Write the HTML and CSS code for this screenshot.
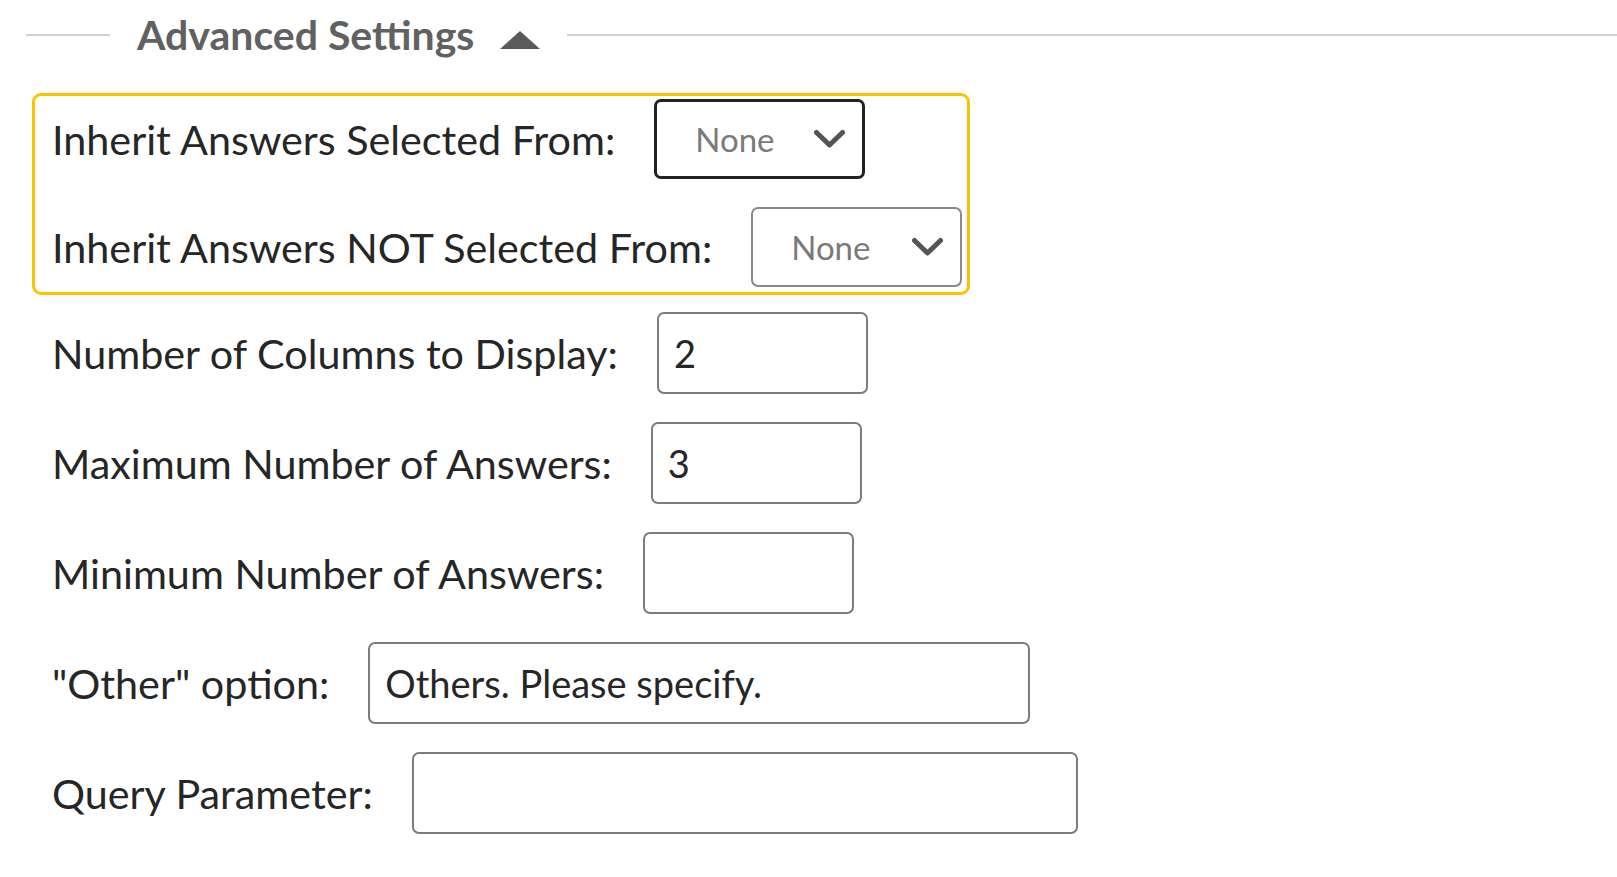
FILE: index.html
```html
<!DOCTYPE html>
<html>
<head>
<meta charset="utf-8">
<link rel="stylesheet" href="styles.css">
</head>
<body>
<div class="page">
  <div class="section-head">
    <span class="rule rule-left"></span>
    <span class="head-title">Advanced Settings</span>
    <svg class="head-caret" width="40" height="18" viewBox="0 0 40 18"><polygon points="20,0 40,18 0,18" fill="#5a5a5a"/></svg>
    <span class="rule rule-right"></span>
  </div>

  <div class="highlight">
    <div class="row">
      <label class="label">Inherit Answers Selected From:</label>
      <div class="select select-focus">
        <span class="select-value">None</span>
        <svg class="chev" width="33" height="20" viewBox="0 0 33 20"><polyline points="3.5,3.5 16.5,16 29.5,3.5" fill="none" stroke="#555" stroke-width="5" stroke-linecap="round" stroke-linejoin="round"/></svg>
      </div>
    </div>
    <div class="row">
      <label class="label">Inherit Answers NOT Selected From:</label>
      <div class="select">
        <span class="select-value">None</span>
        <svg class="chev" width="33" height="20" viewBox="0 0 33 20"><polyline points="3.5,3.5 16.5,16 29.5,3.5" fill="none" stroke="#555" stroke-width="5" stroke-linecap="round" stroke-linejoin="round"/></svg>
      </div>
    </div>
  </div>

  <div class="fields">
    <div class="row">
      <label class="label">Number of Columns to Display:</label>
      <input class="field field-sm" type="text" value="2">
    </div>
    <div class="row">
      <label class="label">Maximum Number of Answers:</label>
      <input class="field field-sm" type="text" value="3">
    </div>
    <div class="row">
      <label class="label">Minimum Number of Answers:</label>
      <input class="field field-sm" type="text" value="">
    </div>
    <div class="row">
      <label class="label">"Other" option:</label>
      <input class="field field-lg" type="text" value="Others. Please specify.">
    </div>
    <div class="row">
      <label class="label">Query Parameter:</label>
      <input class="field field-xl" type="text" value="">
    </div>
  </div>
</div>
</body>
</html>
```

FILE: styles.css
```css
html, body {
  margin: 0;
  padding: 0;
  background: #ffffff;
}

body {
  font-family: Lato, "Open Sans", sans-serif;
  color: #262626;
}

.page {
  padding: 9px 0 0 26px;
}

.section-head {
  display: flex;
  align-items: center;
  height: 52px;
}

.rule {
  display: block;
  height: 2px;
  background: #cfcfcf;
}

.rule-left {
  width: 84px;
}

.rule-right {
  flex: 1 1 auto;
}

.head-title {
  margin-left: 27px;
  font-size: 41px;
  font-weight: 700;
  color: #616161;
  line-height: 52px;
}

.head-caret {
  margin: 10px 27px 0 26px;
  display: block;
}

.highlight {
  margin: 32px 0 0 6px;
  width: 915px;
  border: 3px solid #fbc400;
  border-radius: 9px;
  padding: 3px 0 5px 17px;
  display: flex;
  flex-direction: column;
  gap: 28px;
}

.row {
  display: flex;
  align-items: center;
  gap: 39px;
}

.label {
  font-size: 41.3px;
  line-height: 50px;
  color: #262626;
  white-space: nowrap;
}

.label-tight {
  letter-spacing: -0.3px;
}

.select {
  box-sizing: border-box;
  width: 211px;
  height: 80px;
  border: 2.5px solid #8a8a8a;
  border-radius: 7px;
  display: flex;
  align-items: center;
  justify-content: space-between;
  padding: 0 16px 0 38px;
}

.select-focus {
  border: 3px solid #222222;
}

.select-value {
  font-size: 33px;
  color: #7a7a7a;
}

.chev {
  display: block;
}

.fields {
  margin: 17px 0 0 26px;
  display: flex;
  flex-direction: column;
  gap: 28px;
}

.field {
  box-sizing: border-box;
  height: 82px;
  border: 2.5px solid #7c7c7c;
  border-radius: 7px;
  padding: 0 0 0 15px;
  font-family: Lato, "Open Sans", sans-serif;
  font-size: 38px;
  color: #262626;
  background: #fff;
  outline: none;
}

.field-sm {
  width: 211px;
}

.field-lg {
  width: 662px;
}

.field-xl {
  width: 666px;
}
```
